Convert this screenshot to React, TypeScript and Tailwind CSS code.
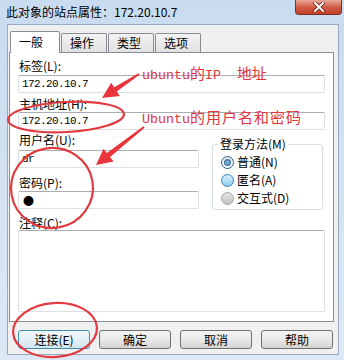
const MONO = "font-['Liberation_Mono',monospace]";

function Label({ text, className = "" }: { text: string; className?: string }) {
  return <div className={`h-[14px] leading-[14px] pl-[1px] ${className}`}>{text}</div>;
}

function TextBox({ value, className = "" }: { value?: string; className?: string }) {
  return (
    <div
      className={`h-[18px] flex items-center pl-[3px] rounded-[2px] border border-[#dbdfe6] border-t-[#abadb3] bg-white ${className}`}
    >
      {value && (
        <span className={`${MONO} text-[11px] tracking-[-0.6px] leading-[14px]`}>{value}</span>
      )}
    </div>
  );
}

function Radio({ state, label }: { state: "on" | "hover" | "off"; label: string }) {
  const ring =
    state === "on"
      ? "border-[#2c628b] bg-linear-to-b from-[#e6e6e6] to-[#ffffff]"
      : state === "hover"
        ? "border-[#3c7fb1] bg-linear-to-b from-[#d6effc] to-[#8fcdf1]"
        : "border-[#a8a8a8] bg-linear-to-b from-[#e4e4e4] to-[#c4c4c4]";
  return (
    <div className="h-[18px] flex items-center pl-[8px] gap-[3px]">
      <span className={`w-[13px] h-[13px] rounded-full border flex items-center justify-center ${ring}`}>
        {state === "on" && (
          <span className="w-[7px] h-[7px] rounded-full bg-radial from-[#8cc4ee] to-[#1d4f7e]" />
        )}
      </span>
      <span className="leading-[14px]">{label}</span>
    </div>
  );
}

function Tab({ label, active }: { label: string; active?: boolean }) {
  if (active) {
    return (
      <div className="relative z-10 -mb-px h-[22px] w-[50px] border border-b-0 border-[#898c95] bg-white rounded-t-[2px] pl-[8px] pt-[3px] leading-[14px]">
        {label}
      </div>
    );
  }
  return (
    <div className="h-[19px] w-[46px] ml-[1px] first:ml-0 border border-b-0 border-[#898c95] bg-linear-to-b from-[#f3f3f3] to-[#e1e1e1] rounded-t-[2px] pl-[8px] pt-[2px] leading-[14px]">
      {label}
    </div>
  );
}

function Button({ label, focused }: { label: string; focused?: boolean }) {
  return (
    <div
      className={`w-[72px] h-[19px] rounded-[3px] border flex items-center justify-center leading-[14px] ${
        focused
          ? "border-[#3d8fb0] bg-linear-to-b from-[#f1f8fc] to-[#d3e6f1]"
          : "border-[#707070] bg-linear-to-b from-[#f4f4f4] via-[#e9e9e9] to-[#d3d3d3]"
      }`}
    >
      {label}
    </div>
  );
}

function Annotations() {
  return (
    <>
      <svg className="absolute inset-0 pointer-events-none" width="344" height="360" viewBox="0 0 344 360">
        <g fill="#e8363c" stroke="none">
          <polygon points="138.5,73.2 114.2,87.3 111.2,82.7 102,98 119.8,96.1 116.8,91.5 139.5,74.8" />
          <polygon points="143.4,126.2 106.9,153.1 103.5,148.8 96,165 113.5,161.4 110.1,157.1 144.6,127.8" />
        </g>
        <g fill="none" stroke="#e23a40" strokeWidth="2.2">
          <ellipse cx="66" cy="117" rx="58" ry="15" transform="rotate(-3 66 117)" />
          <ellipse cx="52" cy="188" rx="41" ry="40" transform="rotate(-10 52 188)" />
          <ellipse cx="55" cy="330" rx="42" ry="27" transform="rotate(-4 55 330)" />
        </g>
      </svg>
      <div className="absolute left-[142px] top-[65px] h-[16px] flex items-baseline whitespace-pre text-[#e0353e] leading-[16px]">
        <span className={`${MONO} text-[13.3px]`}>ubuntu</span>
        <span className="text-[15px]">的</span>
        <span className={`${MONO} text-[13.3px]`}>IP  </span>
        <span className="text-[15px]">地址</span>
      </div>
      <div className="absolute left-[142px] top-[109px] h-[16px] flex items-baseline whitespace-pre text-[#e0353e] leading-[16px]">
        <span className={`${MONO} text-[13.3px]`}>Ubuntu</span>
        <span className="text-[15px] tracking-[1px]">的用户名和密码</span>
      </div>
    </>
  );
}

export default function App() {
  return (
    <div className="relative w-[344px] h-[360px] flex flex-col overflow-hidden bg-linear-to-b from-[#c9dbef] to-[#dde8f5] font-['Noto_Sans_CJK_SC',sans-serif] text-[12px] text-black">
      {/* title bar */}
      <div className="h-[24px] shrink-0 flex items-start">
        <span className="pl-[6px] pt-[4px] leading-[16px]">此对象的站点属性：172.20.10.7</span>
        <div className="ml-auto mr-[2px] w-[47px] h-[15px] rounded-b-[4px] border border-t-0 border-[#7c3226] bg-linear-to-b from-[#e8a99a] via-[#d15c47] to-[#c43d27] flex items-center justify-center">
          <svg width="12" height="10" viewBox="0 0 12 10">
            <path d="M2 1 L10 9 M10 1 L2 9" stroke="#5a1a10" strokeWidth="3.4" strokeLinecap="square" />
            <path d="M2 1 L10 9 M10 1 L2 9" stroke="#ffffff" strokeWidth="2" strokeLinecap="square" />
          </svg>
        </div>
      </div>

      {/* client area */}
      <div className="flex-1 ml-[7px] mr-[5px] mb-[5px] border border-[#98aac1] bg-[#f0f0f0] flex flex-col">
        <div className="flex items-end pt-[6px] ml-[2px]">
          <Tab label="一般" active />
          <Tab label="操作" />
          <Tab label="类型" />
          <Tab label="选项" />
        </div>

        <div className="ml-[1px] mr-[4px] border border-[#898c95] bg-white flex flex-col px-[8px] pb-[9px]">
          <Label text="标签(L):" className="mt-[6px]" />
          <TextBox value="172.20.10.7" className="mt-[2px]" />
          <Label text="主机地址(H):" className="mt-[4px]" />
          <TextBox value="172.20.10.7" className="mt-[1px]" />

          <div className="flex">
            <div className="w-[181px] flex flex-col">
              <Label text="用户名(U):" className="mt-[3px]" />
              <TextBox value="dr" className="mt-[3px]" />
              <Label text="密码(P):" className="mt-[8px]" />
              <div className="mt-[1px] h-[18px] flex items-center pl-[4px] rounded-[2px] border border-[#dbdfe6] border-t-[#abadb3]">
                <span className="text-[11px] leading-[14px]">●</span>
              </div>
            </div>
            <fieldset className="ml-auto mr-[2px] mt-[7px] w-[111px] rounded-[3px] border border-[#d5dfe5] pt-[2px] pb-[2px]">
              <legend className="ml-[5px] px-[2px] h-[14px] leading-[14px]">登录方法(M)</legend>
              <Radio state="on" label="普通(N)" />
              <Radio state="hover" label="匿名(A)" />
              <Radio state="off" label="交互式(D)" />
            </fieldset>
          </div>

          <Label text="注释(C):" className="mt-[6px]" />
          <div className="h-[82px] rounded-[2px] border border-[#dbdfe6] border-t-[#abadb3] bg-white" />
        </div>

        <div className="flex justify-between mt-[8px] pl-[10px] pr-[5px]">
          <Button label="连接(E)" focused />
          <Button label="确定" />
          <Button label="取消" />
          <Button label="帮助" />
        </div>
      </div>

      <Annotations />
    </div>
  );
}
